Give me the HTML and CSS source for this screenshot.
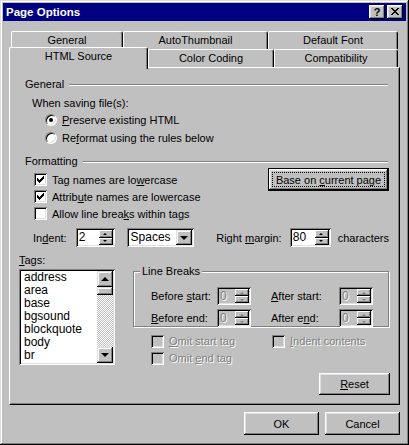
FILE: index.html
```html
<!DOCTYPE html>
<html lang="en">
<head>
    <meta charset="UTF-8">
    <title>Page Options</title>
    <link rel="stylesheet" href="styles.css">
</head>
<body>
    <div class="window">
        <div class="titlebar">
            <span class="title">Page Options</span>
            <div class="cap-btns">
                <div class="cap-btn help">?</div>
                <div class="cap-btn close">
                    <svg width="8" height="7" viewBox="0 0 8 7" shape-rendering="crispEdges">
                        <path d="M0 0h2v1h1v1h2v-1h1v-1h2v1h-1v1h-1v1h-1v1h1v1h1v1h1v1h-2v-1h-1v-1h-2v1h-1v1h-2v-1h1v-1h1v-1h1v-1h-1v-1h-1v-1h-1z" fill="#000"/>
                    </svg>
                </div>
            </div>
        </div>

        <div class="client">
            <div class="tabs">
                <div class="tab-row back">
                    <div class="tab t-general">General</div>
                    <div class="tab t-thumb">AutoThumbnail</div>
                    <div class="tab t-font">Default Font</div>
                </div>
                <div class="tab-row front">
                    <div class="tab t-html selected">HTML Source</div>
                    <div class="tab t-color">Color Coding</div>
                    <div class="tab t-compat">Compatibility</div>
                </div>
            </div>

            <div class="panel">
                <div class="group-head"><span>General</span><div class="etch"></div></div>
                <div class="saving-label">When saving file(s):</div>
                <div class="radio-row"><span class="radio checked"></span><span><u>P</u>reserve existing HTML</span></div>
                <div class="radio-row second"><span class="radio"></span><span>Re<u>f</u>ormat using the rules below</span></div>

                <div class="group-head formatting"><span>Formatting</span><div class="etch"></div></div>
                <div class="format-block">
                    <div class="format-checks">
                        <div class="check-row"><span class="check checked"></span><span>Tag names are lo<u>w</u>ercase</span></div>
                        <div class="check-row"><span class="check checked"></span><span>Attrib<u>u</u>te names are lowercase</span></div>
                        <div class="check-row"><span class="check"></span><span>Allow line brea<u>k</u>s within tags</span></div>
                    </div>
                    <div class="btn default-btn"><span class="focus"><span>Base on <u>c</u>urrent page</span></span></div>
                </div>

                <div class="indent-row">
                    <span class="indent-label">In<u>d</u>ent:</span>
                    <div class="spin indent-spin">
                        <span class="spin-val">2</span>
                        <div class="spin-btns"><span class="spin-btn"><i class="tri-up"></i></span><span class="spin-btn"><i class="tri-down"></i></span></div>
                    </div>
                    <div class="combo">
                        <span class="combo-val">Spaces</span>
                        <span class="combo-btn"><i class="arrow-down"></i></span>
                    </div>
                    <span class="margin-label">Right <u>m</u>argin:</span>
                    <div class="spin margin-spin">
                        <span class="spin-val">80</span>
                        <div class="spin-btns"><span class="spin-btn"><i class="tri-up"></i></span><span class="spin-btn"><i class="tri-down"></i></span></div>
                    </div>
                    <span class="chars-label">characters</span>
                </div>

                <div class="bottom-area">
                    <div class="tags-col">
                        <div class="tags-label"><u>T</u>ags:</div>
                        <div class="listbox">
                            <ul class="list-items">
                                <li>address</li>
                                <li>area</li>
                                <li>base</li>
                                <li>bgsound</li>
                                <li>blockquote</li>
                                <li>body</li>
                                <li>br</li>
                            </ul>
                            <div class="scrollbar">
                                <span class="sb-btn"><i class="arrow-up"></i></span>
                                <span class="sb-thumb"></span>
                                <span class="sb-track"></span>
                                <span class="sb-btn"><i class="arrow-down"></i></span>
                            </div>
                        </div>
                    </div>

                    <div class="breaks-col">
                        <div class="groupbox">
                            <span class="group-label">Line Breaks</span>
                            <div class="breaks-grid">
                                <span>Before <u>s</u>tart:</span>
                                <div class="spin disabled"><span class="spin-val">0</span><div class="spin-btns"><span class="spin-btn"><i class="tri-up"></i></span><span class="spin-btn"><i class="tri-down"></i></span></div></div>
                                <span><u>A</u>fter start:</span>
                                <div class="spin disabled"><span class="spin-val">0</span><div class="spin-btns"><span class="spin-btn"><i class="tri-up"></i></span><span class="spin-btn"><i class="tri-down"></i></span></div></div>
                                <span><u>B</u>efore end:</span>
                                <div class="spin disabled"><span class="spin-val">0</span><div class="spin-btns"><span class="spin-btn"><i class="tri-up"></i></span><span class="spin-btn"><i class="tri-down"></i></span></div></div>
                                <span>After e<u>n</u>d:</span>
                                <div class="spin disabled"><span class="spin-val">0</span><div class="spin-btns"><span class="spin-btn"><i class="tri-up"></i></span><span class="spin-btn"><i class="tri-down"></i></span></div></div>
                            </div>
                        </div>
                        <div class="omit-row first">
                            <div class="check-row dim omit-start"><span class="check"></span><span><u>O</u>mit start tag</span></div>
                            <div class="check-row dim"><span class="check"></span><span><u>I</u>ndent contents</span></div>
                        </div>
                        <div class="omit-row">
                            <div class="check-row dim omit-start"><span class="check"></span><span>Omit <u>e</u>nd tag</span></div>
                        </div>
                        <div class="btn reset-btn"><span><u>R</u>eset</span></div>
                    </div>
                </div>
            </div>

            <div class="dialog-btns">
                <div class="btn">OK</div>
                <div class="btn">Cancel</div>
            </div>
        </div>
    </div>
</body>
</html>
```

FILE: styles.css
```css
* {
    box-sizing: border-box;
    margin: 0;
    padding: 0;
}

body {
    background: #c0c0c0;
    font-family: "Liberation Sans", Arial, sans-serif;
    font-size: 11px;
    color: #000;
}

u {
    text-underline-offset: 1px;
}

.window {
    width: 409px;
    height: 445px;
    padding: 3px;
    background: #c0c0c0;
    box-shadow: inset -1px -1px #000, inset 1px 1px #dfdfdf, inset -2px -2px #808080, inset 2px 2px #fff;
    display: flex;
    flex-direction: column;
}

/* title bar */
.titlebar {
    height: 18px;
    background: #000080;
    color: #fff;
    display: flex;
    align-items: center;
    padding: 0 3px 0 3px;
}

.title {
    flex: 1;
    font-weight: bold;
    font-size: 11.5px;
}

.cap-btns {
    display: flex;
    gap: 2px;
}

.cap-btn {
    width: 16px;
    height: 14px;
    background: #c0c0c0;
    color: #000;
    box-shadow: inset -1px -1px #000, inset 1px 1px #fff, inset -2px -2px #808080, inset 2px 2px #dfdfdf;
    display: flex;
    align-items: center;
    justify-content: center;
    font-weight: bold;
    font-size: 11px;
    padding-bottom: 1px;
}

/* client */
.client {
    flex: 1;
    padding: 10px 6px 7px;
    display: flex;
    flex-direction: column;
}

/* tabs */
.tab-row {
    display: flex;
    height: 18px;
    padding: 0 2px;
}

.tab {
    height: 18px;
    display: flex;
    align-items: center;
    justify-content: center;
    background: #c0c0c0;
    border-top: 1px solid #fff;
    border-left: 1px solid #fff;
    border-right: 1px solid #000;
    border-radius: 2px 3px 0 0;
    box-shadow: inset -1px 0 #808080;
    padding-bottom: 1px;
}

.t-general { width: 112px; }
.t-thumb { width: 145px; }
.t-font { width: 130px; }
.t-html { width: 139px; }
.t-color { width: 126px; }
.t-compat { width: 124px; }

.tab.selected {
    position: relative;
    z-index: 1;
    height: 22px;
    margin: -2px 0 -2px -2px;
    align-items: flex-start;
    padding-top: 2px;
}

/* panel */
.panel {
    height: 338px;
    border: 1px solid;
    border-color: #fff #000 #000 #fff;
    box-shadow: inset -1px -1px #808080;
    padding: 8px 10px 0 9px;
    display: flex;
    flex-direction: column;
}

.group-head {
    height: 16px;
    display: flex;
    align-items: center;
    margin-left: 6px;
    margin-right: 1px;
}

.etch {
    flex: 1;
    height: 2px;
    margin-left: 5px;
    margin-top: 1px;
    border-top: 1px solid #808080;
    border-bottom: 1px solid #fff;
}

.saving-label {
    height: 16px;
    line-height: 16px;
    margin: 3px 0 0 13px;
}

.radio-row {
    height: 16px;
    display: flex;
    align-items: center;
    gap: 5px;
    margin: 1px 0 0 26px;
}

.radio-row.second {
    margin-top: 2px;
}

.radio {
    width: 12px;
    height: 12px;
    border-radius: 50%;
    background: #fff;
    border: 1px solid;
    border-color: #808080 #fff #fff #808080;
    box-shadow: inset 1px 1px #000, inset -1px -1px #dfdfdf;
    display: flex;
    align-items: center;
    justify-content: center;
}

.radio.checked::after {
    content: "";
    width: 4px;
    height: 4px;
    border-radius: 50%;
    background: #000;
}

.group-head.formatting {
    margin-top: 7px;
}

.format-block {
    display: flex;
    margin-top: -1px;
}

.format-checks {
    margin-left: 15px;
    padding-top: 3px;
}

.check-row {
    height: 17px;
    display: flex;
    align-items: center;
    gap: 5px;
}

.check {
    width: 13px;
    height: 13px;
    flex-shrink: 0;
    background: #fff;
    box-shadow: inset 1px 1px #808080, inset -1px -1px #fff, inset 2px 2px #000, inset -2px -2px #dfdfdf;
}

.check.checked {
    background: #fff url("data:image/svg+xml,%3Csvg xmlns='http://www.w3.org/2000/svg' width='13' height='13' shape-rendering='crispEdges'%3E%3Cpath d='M3 5h1v3h-1zM4 6h1v3h-1zM5 7h1v3h-1zM6 6h1v3h-1zM7 5h1v3h-1zM8 4h1v3h-1zM9 3h1v3h-1z' fill='%23000'/%3E%3C/svg%3E") no-repeat;
}

.dim {
    color: #808080;
    text-shadow: 1px 1px #fff;
}

.dim .check {
    background: #c0c0c0;
}

/* buttons */
.btn {
    background: #c0c0c0;
    box-shadow: inset -1px -1px #000, inset 1px 1px #fff, inset -2px -2px #808080, inset 2px 2px #dfdfdf;
    display: flex;
    align-items: center;
    justify-content: center;
}

.default-btn {
    margin-left: auto;
    width: 121px;
    height: 23px;
    border: 1px solid #000;
    padding: 3px;
}

.default-btn .focus {
    flex: 1;
    align-self: stretch;
    display: flex;
    align-items: center;
    justify-content: center;
    border: 1px dotted #000;
}

/* indent row */
.indent-row {
    height: 19px;
    margin-top: 6px;
    display: flex;
    align-items: center;
}

.indent-label {
    width: 43px;
    margin-left: 14px;
}

.spin {
    height: 19px;
    background: #fff;
    box-shadow: inset 1px 1px #808080, inset -1px -1px #fff, inset 2px 2px #000, inset -2px -2px #dfdfdf;
    padding: 2px;
    display: flex;
}

.indent-spin { width: 39px; }
.margin-spin { width: 41px; }

.spin-val {
    flex: 1;
    padding-left: 1px;
    line-height: 15px;
    font-size: 12px;
}

.spin-btns {
    width: 14px;
    display: flex;
    flex-direction: column;
}

.spin-btn {
    flex: 1;
    background: #c0c0c0;
    box-shadow: inset -1px -1px #000, inset 1px 1px #fff, inset -2px -2px #808080;
    display: flex;
    align-items: center;
    justify-content: center;
}

.tri-up {
    border-left: 2px solid transparent;
    border-right: 2px solid transparent;
    border-bottom: 2px solid #000;
    margin-left: -1px;
}

.tri-down {
    border-left: 2px solid transparent;
    border-right: 2px solid transparent;
    border-top: 2px solid #000;
    margin-left: -1px;
}

.spin.disabled {
    background: #c0c0c0;
    height: 18px;
}

.spin.disabled .spin-val {
    color: #808080;
    text-shadow: 1px 1px #fff;
    line-height: 14px;
}

.spin.disabled .tri-up {
    border-bottom-color: #808080;
}

.spin.disabled .tri-down {
    border-top-color: #808080;
}

.combo {
    width: 68px;
    height: 19px;
    margin-left: 12px;
    background: #fff;
    box-shadow: inset 1px 1px #808080, inset -1px -1px #fff, inset 2px 2px #000, inset -2px -2px #dfdfdf;
    padding: 2px;
    display: flex;
}

.combo-val {
    flex: 1;
    padding-left: 2px;
    line-height: 15px;
    font-size: 12px;
}

.combo-btn {
    width: 16px;
    background: #c0c0c0;
    box-shadow: inset -1px -1px #000, inset 1px 1px #dfdfdf, inset -2px -2px #808080, inset 2px 2px #fff;
    display: flex;
    align-items: center;
    justify-content: center;
}

.arrow-down {
    border-left: 4px solid transparent;
    border-right: 4px solid transparent;
    border-top: 4px solid #000;
    margin-left: -1px;
}

.arrow-up {
    border-left: 4px solid transparent;
    border-right: 4px solid transparent;
    border-bottom: 4px solid #000;
    margin-left: -1px;
}

.margin-label {
    width: 74px;
    margin-left: 22px;
}

.chars-label {
    margin-left: 7px;
}

/* tags + line breaks */
.bottom-area {
    display: flex;
    margin-top: 5px;
}

.tags-col {
    width: 96px;
}

.tags-label {
    height: 16px;
    line-height: 16px;
}

.listbox {
    margin-top: 1px;
    height: 96px;
    background: #fff;
    box-shadow: inset 1px 1px #808080, inset -1px -1px #fff, inset 2px 2px #000, inset -2px -2px #dfdfdf;
    padding: 2px;
    display: flex;
}

.list-items {
    flex: 1;
    list-style: none;
    padding-left: 3px;
    font-size: 12px;
    line-height: 13px;
    overflow: hidden;
}

.scrollbar {
    width: 16px;
    display: flex;
    flex-direction: column;
}

.sb-btn {
    height: 16px;
    background: #c0c0c0;
    box-shadow: inset -1px -1px #000, inset 1px 1px #dfdfdf, inset -2px -2px #808080, inset 2px 2px #fff;
    display: flex;
    align-items: center;
    justify-content: center;
}

.sb-thumb {
    height: 8px;
    background: #c0c0c0;
    box-shadow: inset -1px -1px #000, inset 1px 1px #dfdfdf, inset -2px -2px #808080, inset 2px 2px #fff;
}

.sb-track {
    flex: 1;
    background: repeating-conic-gradient(#c0c0c0 0 25%, #fff 0 50%) 0 0 / 2px 2px;
}

.breaks-col {
    flex: 1;
    margin-left: 18px;
    display: flex;
    flex-direction: column;
}

.groupbox {
    margin-top: 19px;
    height: 56px;
    border: 1px solid #808080;
    box-shadow: inset 1px 1px #fff, 1px 1px #fff;
    padding-bottom: 5px;
}

.group-label {
    display: inline-block;
    height: 13px;
    line-height: 13px;
    margin: -7px 0 0 6px;
    padding: 0 2px;
    background: #c0c0c0;
    vertical-align: top;
}

.breaks-grid {
    display: grid;
    grid-template-columns: 66px 54px 68px 34px;
    grid-auto-rows: 18px;
    row-gap: 4px;
    align-items: center;
    margin: 3px 0 0 17px;
}

.breaks-grid .spin {
    width: 34px;
}

.omit-row {
    display: flex;
    height: 16px;
    margin-top: 1px;
}

.omit-row.first {
    margin-top: 6px;
}

.omit-row .check-row {
    height: 16px;
}

.omit-start {
    width: 121px;
    margin-left: 18px;
}

.reset-btn {
    align-self: flex-end;
    width: 71px;
    height: 22px;
    margin: 7px -1px 0 0;
}

/* dialog buttons */
.dialog-btns {
    display: flex;
    justify-content: flex-end;
    gap: 6px;
    margin-top: 7px;
}

.dialog-btns .btn {
    width: 75px;
    height: 23px;
}
```
